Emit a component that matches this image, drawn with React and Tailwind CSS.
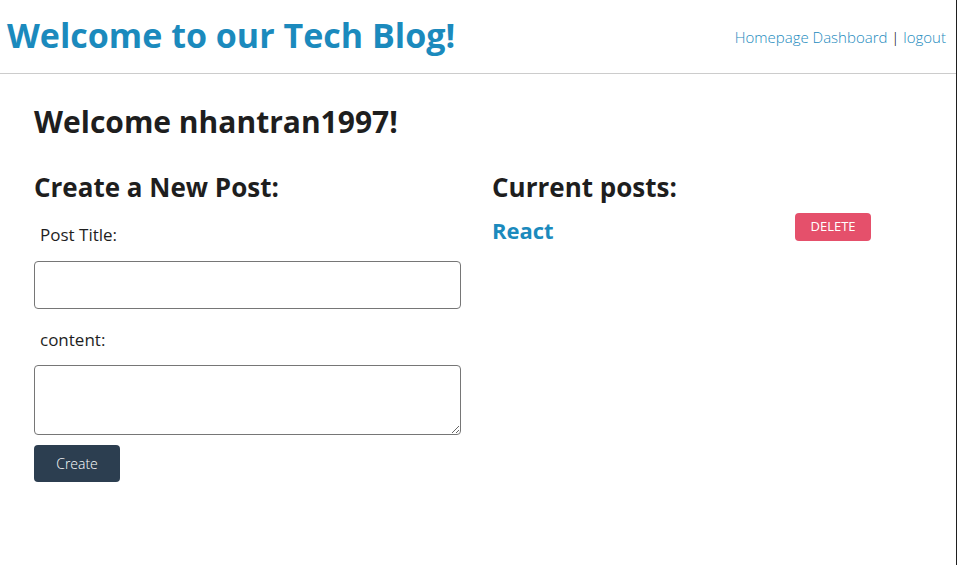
const posts = [{ id: 1, title: "React" }];

const App = () => {
  return (
    <div className="min-h-screen w-[957px] bg-white border-r border-[#1f1f1f] text-[#1e1e1e] font-['Open_Sans',sans-serif]">
      <header className="h-[74px] flex items-center justify-between border-b border-[#cccccc] pl-[7px] pr-[10px]">
        <h1 className="text-[34px] leading-none font-bold text-[#1b8abd] -mt-[3px]">Welcome to our Tech Blog!</h1>
        <nav className="text-[15px] font-light text-[#1b8abd] mt-[1px]">
          <a href="#">Homepage</a> <a href="#">Dashboard</a> <span className="text-black">|</span> <a href="#">logout</a>
        </nav>
      </header>

      <main className="pl-[34px] pt-[28px]">
        <h2 className="text-[30px] leading-[40px] font-bold">Welcome nhantran1997!</h2>

        <div className="flex mt-[28px]">
          <section className="w-[427px]">
            <h3 className="text-[26px] leading-[34px] font-bold">Create a New Post:</h3>
            <form className="flex flex-col">
              <label className="text-[17px] leading-[24px] pl-[6px] mt-[19px]">Post Title:</label>
              <input type="text" className="mt-[14px] h-[48px] w-full border border-[#767676] rounded-[4px]" />
              <label className="text-[17px] leading-[24px] pl-[6px] mt-[19px]">content:</label>
              <textarea className="mt-[13px] h-[70px] w-full border border-[#767676] rounded-[4px]" />
              <button type="button" className="mt-[10px] w-[86px] h-[37px] bg-[#2c3e50] text-white text-[14px] font-light rounded-[4px]">
                Create
              </button>
            </form>
          </section>

          <section className="ml-[31px] w-[379px]">
            <h3 className="text-[26px] leading-[34px] font-bold">Current posts:</h3>
            {posts.map((post) => (
              <div key={post.id} className="flex items-center justify-between mt-[5px]">
                <a href="#" className="text-[22px] leading-[30px] font-bold text-[#1b8abd] mt-[6px]">{post.title}</a>
                <button type="button" className="w-[76px] h-[28px] bg-[#e5506b] text-white text-[13px] rounded-[4px]">
                  DELETE
                </button>
              </div>
            ))}
          </section>
        </div>
      </main>
    </div>
  );
};

export default App;
